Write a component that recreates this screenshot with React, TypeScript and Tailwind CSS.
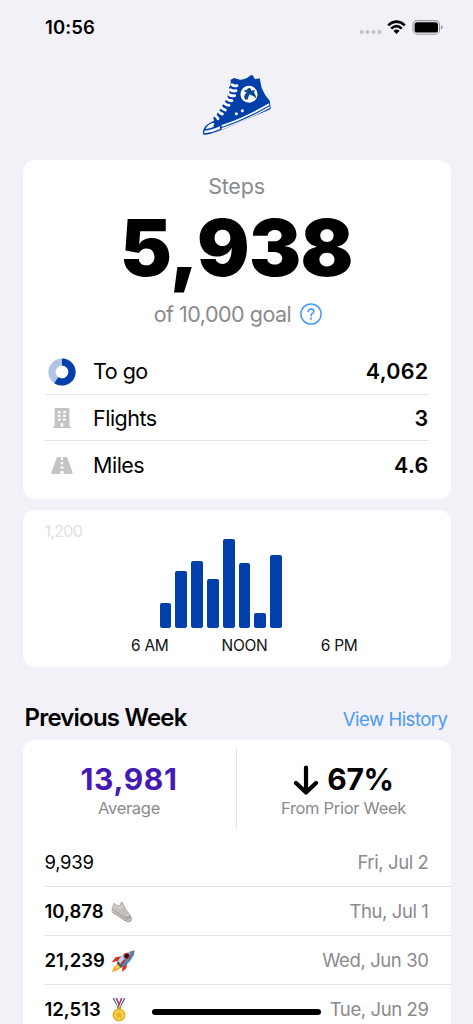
import React from "react";

const INTER = "font-['Inter','Liberation_Sans',sans-serif]";

function StatusBar() {
  return (
    <div className="flex h-[55px] items-center justify-between pl-[45px] pr-[30px]">
      <span className="text-[18.5px] font-semibold leading-none tracking-[0.1px]">10:56</span>
      <div className="flex items-center">
        <svg width="23" height="18" viewBox="0 0 23 18" fill="#c3c3c8">
          <circle cx="2.5" cy="13" r="2.1" />
          <circle cx="8.5" cy="13" r="2.1" />
          <circle cx="14.5" cy="13" r="2.1" />
          <circle cx="20.5" cy="13" r="2.1" />
        </svg>
        <svg className="ml-[5px]" width="19" height="18" viewBox="0 0 19 18" fill="none" stroke="#000" strokeWidth="2.6">
          <path d="M1.2 6.4Q9.5 -1 17.8 6.4" />
          <path d="M4.2 9.6Q9.5 4.8 14.8 9.6" />
          <path d="M9.5 15L6.4 11.8Q9.5 9 12.6 11.8Z" fill="#000" stroke="none" />
        </svg>
        <svg className="ml-[6px]" width="31" height="18" viewBox="0 0 31 18">
          <rect x="1" y="1.6" width="26.5" height="13.6" rx="4.3" fill="none" stroke="#98989c" strokeWidth="1.1" />
          <rect x="2.6" y="3.3" width="23.4" height="10.2" rx="2.6" fill="#000" />
          <path d="M29 6.3Q30.7 6.9 30.7 8.4T29 10.5Z" fill="#98989c" />
        </svg>
      </div>
    </div>
  );
}

function HighTop() {
  return (
    <svg width="95" height="80" viewBox="0 0 285 240">
      <path
        d="M122 44L132 39L140 41Q160 50 182 31L188 31L195 43L209 40L215 69Q223 90 239 107L242 128Q243 132 238 134Q190 154 150 172Q100 195 62 206Q48 210 40 209Q36 196 45 185Q52 176 72 167L70 157L80 150L84 140L91 133L95 123L102 116L107 106L113 98L113 88L119 80L117 68L122 59Z"
        fill="#0140aa"
      />
      <path d="M50 186Q57 175 73 173L70 186Q60 191 46 192Z" fill="#fff" />
      <path d="M43 197Q65 196 90 184L90 192Q68 203 43 205Z" fill="#fff" />
      <path d="M95 180Q160 159 237 115L238 121Q165 162 95 186Z" fill="#fff" />
      <path d="M95 189Q165 167 239 124L239 129Q165 168 95 194Z" fill="#fff" />
      <g fill="none" stroke="#fff" strokeWidth="8.5" strokeLinecap="round">
        <path d="M126 59Q132 64 141 62M121 74Q129 80 138 77M117 88Q124 94 134 92M111 102Q117 108 126 107M103 115Q109 121 117 121M94 127Q100 134 106 135M86 140Q91 146 97 147M77 153Q82 157 84 161" />
      </g>
      <circle cx="177" cy="88" r="25.5" fill="#fff" />
      <path
        d="M173 71Q179 67 183 72L184 77L195 75L192 83Q199 90 199 101Q192 93 184 91L179 88Q175 94 174 103L167 104L162 97Q164 88 170 82L162 80L169 76Z"
        fill="#12458f"
      />
      <path d="M163 75Q170 79 177 77" stroke="#12458f" strokeWidth="3" fill="none" />
      <circle cx="157" cy="137" r="4.5" fill="#fff" />
      <circle cx="139" cy="146" r="4.5" fill="#fff" />
    </svg>
  );
}

function ProgressRing() {
  return (
    <svg width="28" height="28" viewBox="0 0 28 28" fill="none" strokeWidth="7.2">
      <circle cx="14" cy="14" r="10" stroke="#b1c4e6" />
      <circle cx="14" cy="14" r="10" stroke="#0140aa" strokeDasharray="37.3 62.83" transform="rotate(-90 14 14)" />
    </svg>
  );
}

function Building() {
  return (
    <svg width="18" height="20" viewBox="0 0 18 20">
      <path d="M1.6 .8Q1.6 0 2.4 0H15.6Q16.4 0 16.4 .8V18.6H18V20H0V18.6H1.6Z" fill="#c4c4c6" />
      <path
        d="M5 3h2.6v2.3H5zM10.2 3h2.6v2.3h-2.6zM5 6.7h2.6V9H5zM10.2 6.7h2.6V9h-2.6zM5 10.4h2.6v2.3H5zM10.2 10.4h2.6v2.3h-2.6zM7.7 15.2h2.6v3.6H7.7z"
        fill="#fff"
      />
    </svg>
  );
}

function Road() {
  return (
    <svg width="22" height="17" viewBox="0 0 22 17">
      <path d="M5.6 1Q6 0 7 0H15Q16 0 16.4 1L21.6 15.2Q22 17 20.4 17H1.6Q0 17 .4 15.2Z" fill="#c4c4c6" />
      <path d="M9.9 0h2.2v2.8H9.9zM9.8 5h2.4v2.2H9.8zM9.6 9.5h2.8v2.2H9.6zM9.3 14h3.4v3H9.3z" fill="#fff" />
    </svg>
  );
}

function Stat({ icon, label, value, last }: { icon: React.ReactNode; label: string; value: string; last?: boolean }) {
  return (
    <div className={`flex h-[46.6px] items-center pt-[1.5px] text-[21.5px] ${last ? "" : "border-b border-[#e4e4e6]"}`}>
      <span className="flex w-[35px] justify-center">{icon}</span>
      <span className="ml-[13.5px] tracking-[-0.5px]">{label}</span>
      <span className="ml-auto font-semibold tracking-[0.3px]">{value}</span>
    </div>
  );
}

const bars = [24.6, 56.6, 66.6, 48.8, 88.6, 64.2, 14.4, 73];

function Chart() {
  return (
    <section className="mt-[11.5px] h-[157px] rounded-[12px] bg-white px-[22px] pt-[13px]">
      <div className="h-[16px] text-[16px] leading-[16px] tracking-[-0.7px] text-[#e1e1e3]">1,200</div>
      <div className="ml-[115px] flex h-[88.6px] items-end gap-[4.15px]">
        {bars.map((h, i) => (
          <div key={i} className="w-[11.7px] rounded-[2px] bg-[#0140aa]" style={{ height: h }} />
        ))}
      </div>
      <div className="ml-[58px] mt-[8px] grid w-[284px] grid-cols-3 text-center text-[15.5px] leading-[20px] tracking-[-0.3px] text-[#111]">
        <span>6 AM</span>
        <span>NOON</span>
        <span>6 PM</span>
      </div>
    </section>
  );
}

function Sneaker() {
  return (
    <svg width="22" height="22" viewBox="0 0 66 66">
      <path d="M8 5L19 12Q29 15 29 4L34 2L43 21L59 43Q66 53 60 61Q54 67 44 61L2 34L2 25Z" fill="#aaa7a4" />
      <path d="M9 7L19 14Q30 17 31 5L41 22L55 39Q54 46 43 48L6 24Z" fill="#cdcac7" />
      <path d="M2 27L42 55Q50 60 59 53L60 58Q54 65 44 60L2 34Z" fill="#dedbd8" />
      <path d="M11 22L35 35L43 48M43 23L30 27M47 29L36 33M51 35L41 39" stroke="#aaa6a2" strokeWidth="2" fill="none" />
      <path d="M4 33L42 58Q51 64 60 59" stroke="#918c87" strokeWidth="2.5" fill="none" />
    </svg>
  );
}

function Rocket() {
  return (
    <svg width="24" height="23" viewBox="0 0 72 69">
      <path d="M19 42L8 51L3 67L18 61L29 53Z" fill="#f4a51f" />
      <path d="M17 46L9 60L26 51Z" fill="#ffe25b" />
      <path d="M31 19L14 22L2 37L22 33ZM49 40L46 55L33 66L35 49Z" fill="#dc3023" />
      <path d="M19 38Q26 11 70 2Q67 34 32 53Z" fill="#4b88b8" />
      <path d="M19 38Q28 14 66 4Q48 17 26 44Z" fill="#b8d9e8" />
      <path d="M55 5L71 1L68 18Z" fill="#5b7da0" />
      <circle cx="47" cy="18" r="9.5" fill="#c9302c" />
      <circle cx="47" cy="18" r="6" fill="#10121c" />
      <path d="M21 34L35 49L30 54L17 40Z" fill="#525361" />
      <path d="M33 34L42 28L43 33L26 50Z" fill="#c92e2b" />
    </svg>
  );
}

function Medal() {
  return (
    <svg width="14" height="24" viewBox="0 0 42 72">
      <path d="M2 1H15L27 29H18Z" fill="#253a9a" />
      <path d="M6 1H11L23 29H19Z" fill="#fff" />
      <path d="M11 1H15L27 29H23Z" fill="#d93543" />
      <path d="M40 1H27L16 29H25Z" fill="#253a9a" />
      <path d="M36 1H31L19 29H23Z" fill="#fff" />
      <path d="M31 1H27L16 29H20Z" fill="#d93543" />
      <rect x="15" y="27" width="12" height="8" rx="3" fill="#d59a19" />
      <circle cx="21" cy="51" r="19" fill="#dfaa20" />
      <circle cx="21" cy="51" r="15" fill="#f9d64a" />
      <path d="M21 39L24 47L33 47L26 53L29 62L21 57L13 62L16 53L9 47L18 47Z" fill="#e4ae25" />
    </svg>
  );
}

function Day({ steps, date, icon }: { steps: string; date: string; icon?: React.ReactNode }) {
  return (
    <div className="ml-[22px] flex h-[49px] items-center border-b border-[#e4e4e6] pr-[22px] pt-[2px] text-[18.5px]">
      <span className={icon ? "font-semibold tracking-[0px]" : "tracking-[-0.3px]"}>{steps}</span>
      {icon && <span className="ml-[6px] flex w-[24px] justify-center">{icon}</span>}
      <span className="ml-auto tracking-[-0.4px] text-[#8a8a8e]">{date}</span>
    </div>
  );
}

export default function App() {
  return (
    <div className={`relative h-[1024px] w-[473px] overflow-hidden bg-[#f2f1f7] text-black ${INTER}`}>
      <StatusBar />
      <div className="flex h-[105px] justify-center pl-[2px] pt-[10px]">
        <HighTop />
      </div>
      <main className="mx-[22.5px]">
        <section className="h-[338.5px] rounded-[12px] bg-white px-[22px] pt-[13px]">
          <div className="text-center text-[21.5px] leading-[26px] tracking-[-0.2px] text-[#8a8a8e]">Steps</div>
          <div className="h-[98px] text-center text-[78px] font-black leading-[97px] tracking-[-0.6px]">5,938</div>
          <div className="flex h-[34px] items-center justify-center pl-[3px] text-[21.5px] tracking-[-0.5px] text-[#8a8a8e]">
            of 10,000 goal
            <svg className="ml-[9px]" width="22" height="22" viewBox="0 0 22 22" fill="none" stroke="#4a9af5" strokeWidth="1.5">
              <circle cx="11" cy="11" r="10.1" />
              <path d="M8.2 8.6Q8.3 6.1 11.1 6.1Q13.8 6.2 13.8 8.4Q13.8 9.7 12.4 10.5Q11 11.3 11 12.9" strokeLinecap="round" />
              <circle cx="11" cy="15.7" r="1.1" fill="#4a9af5" stroke="none" />
            </svg>
          </div>
          <div className="mt-[17px]">
            <Stat icon={<ProgressRing />} label="To go" value="4,062" />
            <Stat icon={<Building />} label="Flights" value="3" />
            <Stat icon={<Road />} label="Miles" value="4.6" last />
          </div>
        </section>
        <Chart />
        <div className="mt-[33px] flex h-[40px] items-center justify-between pl-[2px] pr-[3px]">
          <h2 className="pb-[5px] text-[24px] font-semibold tracking-[-0.8px]">Previous Week</h2>
          <span className="text-[18.5px] tracking-[-0.5px] text-[#4a9af5]">View History</span>
        </div>
        <section className="h-[320px] rounded-t-[12px] bg-white">
          <div className="grid h-[98px] grid-cols-2 pt-[8px]">
            <div className="h-[81px] border-r border-[#e4e4e6] pt-[13px] text-center">
              <div className="text-[30px] font-bold leading-[37px] tracking-[0.6px] text-[#4519b4]">13,981</div>
              <div className="text-[16.5px] leading-[20px] tracking-[-0.3px] text-[#8a8a8e]">Average</div>
            </div>
            <div className="pt-[13px] text-center">
              <div className="flex h-[37px] items-center justify-center text-[30px] font-bold tracking-[-0.3px]">
                <svg className="mr-[8px]" width="26" height="30" viewBox="0 0 26 30" fill="none" stroke="#000" strokeWidth="4.2" strokeLinecap="round" strokeLinejoin="round">
                  <path d="M13 2.5V27M3 18L13 27.5L23 18" />
                </svg>
                67%
              </div>
              <div className="text-[16.5px] leading-[20px] tracking-[-0.3px] text-[#8a8a8e]">From Prior Week</div>
            </div>
          </div>
          <Day steps="9,939" date="Fri, Jul 2" />
          <Day steps="10,878" date="Thu, Jul 1" icon={<Sneaker />} />
          <Day steps="21,239" date="Wed, Jun 30" icon={<Rocket />} />
          <Day steps="12,513" date="Tue, Jun 29" icon={<Medal />} />
        </section>
      </main>
      <div className="absolute left-[152px] top-[1009px] h-[6px] w-[169px] rounded-full bg-black" />
    </div>
  );
}
